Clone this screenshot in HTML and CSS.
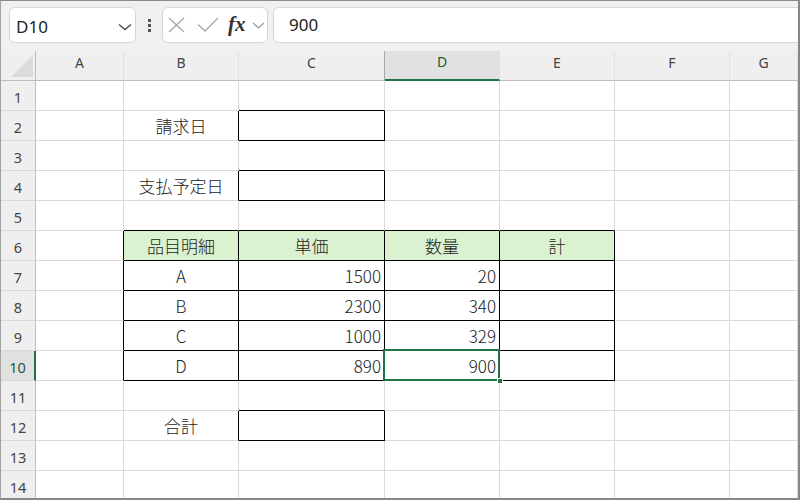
FILE: index.html
```html
<!DOCTYPE html>
<html lang="ja">
<head>
<meta charset="utf-8">
<title>Sheet</title>
<link rel="stylesheet" href="styles.css">
</head>
<body>
<div class="window">
  <div class="toolbar">
    <div class="namebox">
      <span class="nb-text">D10</span>
      <svg class="nb-chev" width="14" height="8" viewBox="0 0 14 8"><polyline points="1,1.5 7,6.5 13,1.5" fill="none" stroke="#4a4a4a" stroke-width="1.4"/></svg>
    </div>
    <div class="dots"><i></i><i></i><i></i></div>
    <div class="fxbox">
      <svg class="ic-x" width="17" height="16" viewBox="0 0 17 16"><line x1="1" y1="1" x2="16" y2="15" stroke="#a9a9a9" stroke-width="1.4"/><line x1="16" y1="1" x2="1" y2="15" stroke="#a9a9a9" stroke-width="1.4"/></svg>
      <svg class="ic-ok" width="22" height="15" viewBox="0 0 22 15"><polyline points="1,7.5 8,14 21,1" fill="none" stroke="#a9a9a9" stroke-width="1.4"/></svg>
      <span class="fx">fx</span>
      <svg class="ic-chev" width="13" height="7" viewBox="0 0 13 7"><polyline points="1,1 6.5,6 12,1" fill="none" stroke="#9a9a9a" stroke-width="1.2"/></svg>
    </div>
    <div class="formula">900</div>
  </div>

  <div class="sheet">
    <!-- column headers -->
    <div class="corner"><i class="tri"></i></div>
    <div class="h">A</div><div class="h">B</div><div class="h h-before-sel">C</div><div class="h sel-h">D</div><div class="h">E</div><div class="h">F</div><div class="h">G</div>

    <!-- row 1 -->
    <div class="rh">1</div>
    <div class="c"></div><div class="c"></div><div class="c kb"></div><div class="c"></div><div class="c"></div><div class="c"></div><div class="c"></div>
    <!-- row 2 -->
    <div class="rh">2</div>
    <div class="c"></div><div class="c ctr kr">請求日</div><div class="c kb kr"></div><div class="c"></div><div class="c"></div><div class="c"></div><div class="c"></div>
    <!-- row 3 -->
    <div class="rh">3</div>
    <div class="c"></div><div class="c"></div><div class="c kb"></div><div class="c"></div><div class="c"></div><div class="c"></div><div class="c"></div>
    <!-- row 4 -->
    <div class="rh">4</div>
    <div class="c"></div><div class="c ctr kr">支払予定日</div><div class="c kb kr"></div><div class="c"></div><div class="c"></div><div class="c"></div><div class="c"></div>
    <!-- row 5 -->
    <div class="rh">5</div>
    <div class="c"></div><div class="c kb"></div><div class="c kb"></div><div class="c kb"></div><div class="c kb"></div><div class="c"></div><div class="c"></div>
    <!-- row 6 -->
    <div class="rh">6</div>
    <div class="c kr"></div><div class="c ctr kb kr g">品目明細</div><div class="c ctr kb kr g">単価</div><div class="c ctr kb kr g">数量</div><div class="c ctr kb kr g">計</div><div class="c"></div><div class="c"></div>
    <!-- row 7 -->
    <div class="rh">7</div>
    <div class="c kr"></div><div class="c ctr kb kr">A</div><div class="c num kb kr">1500</div><div class="c num kb kr">20</div><div class="c kb kr"></div><div class="c"></div><div class="c"></div>
    <!-- row 8 -->
    <div class="rh">8</div>
    <div class="c kr"></div><div class="c ctr kb kr">B</div><div class="c num kb kr">2300</div><div class="c num kb kr">340</div><div class="c kb kr"></div><div class="c"></div><div class="c"></div>
    <!-- row 9 -->
    <div class="rh">9</div>
    <div class="c kr"></div><div class="c ctr kb kr">C</div><div class="c num kb kr">1000</div><div class="c num kb kr">329</div><div class="c kb kr"></div><div class="c"></div><div class="c"></div>
    <!-- row 10 -->
    <div class="rh sel-r">10</div>
    <div class="c kr"></div><div class="c ctr kb kr">D</div><div class="c num kb kr">890</div><div class="c num kb kr active">900<span class="sel"><i class="handle"></i></span></div><div class="c kb kr"></div><div class="c"></div><div class="c"></div>
    <!-- row 11 -->
    <div class="rh">11</div>
    <div class="c"></div><div class="c"></div><div class="c kb"></div><div class="c"></div><div class="c"></div><div class="c"></div><div class="c"></div>
    <!-- row 12 -->
    <div class="rh">12</div>
    <div class="c"></div><div class="c ctr kr">合計</div><div class="c kb kr"></div><div class="c"></div><div class="c"></div><div class="c"></div><div class="c"></div>
    <!-- row 13 -->
    <div class="rh">13</div>
    <div class="c"></div><div class="c"></div><div class="c"></div><div class="c"></div><div class="c"></div><div class="c"></div><div class="c"></div>
    <!-- row 14 -->
    <div class="rh">14</div>
    <div class="c"></div><div class="c"></div><div class="c"></div><div class="c"></div><div class="c"></div><div class="c"></div><div class="c"></div>
  </div>
</div>
</body>
</html>
```
FILE: styles.css
```css
* { box-sizing: border-box; }
html, body { margin: 0; padding: 0; }
body {
  width: 800px;
  height: 500px;
  overflow: hidden;
  background: #fff;
  font-family: "Noto Sans CJK JP", "Noto Sans", sans-serif;
}
.window {
  width: 800px;
  height: 500px;
  border-style: solid;
  border-width: 1px 2px 2px 1px;
  border-color: #8a8a8a #878787 #878787 #a2a2a2;
  display: flex;
  flex-direction: column;
  overflow: hidden;
  background: #fff;
}

/* ---------- toolbar ---------- */
.toolbar {
  flex: 0 0 50px;
  height: 50px;
  background: #f0f0f0;
  display: flex;
  align-items: flex-start;
  padding: 6px 0 0 8px;
  overflow: hidden;
}
.namebox {
  width: 127px;
  height: 36px;
  background: #fff;
  border: 1px solid #d6d6d6;
  border-radius: 6px;
  display: flex;
  align-items: center;
  padding: 2px 3px 0 6px;
  font-family: "Noto Sans", sans-serif;
  font-size: 17px;
  line-height: 1;
  color: #222;
}
.nb-text { flex: 1; }
.nb-chev { display: block; margin-top: 1px; }
.dots {
  width: 26px;
  height: 36px;
  display: flex;
  flex-direction: column;
  align-items: center;
  justify-content: center;
  gap: 2px;
}
.dots i {
  display: block;
  width: 3px;
  height: 3px;
  background: #555;
}
.fxbox {
  width: 106px;
  height: 36px;
  background: #fff;
  border: 1px solid #d6d6d6;
  border-radius: 6px;
  display: flex;
  align-items: center;
}
.ic-x { display: block; margin-left: 5px; }
.ic-ok { display: block; margin-left: 12px; margin-top: -2px; }
.fx {
  margin-left: 9px;
  font-family: "Liberation Serif", "DejaVu Serif", serif;
  font-style: italic;
  font-weight: bold;
  font-size: 21px;
  line-height: 1;
  color: #333;
  margin-top: -2px;
}
.ic-chev { display: block; margin-left: 6px; margin-top: 1px; }
.formula {
  flex: 1;
  height: 36px;
  margin-left: 5px;
  margin-right: -12px;
  background: #fff;
  border: 1px solid #d6d6d6;
  border-radius: 6px;
  display: flex;
  align-items: center;
  padding: 0 0 1px 15px;
  font-family: "Noto Sans", sans-serif;
  font-size: 17px;
  line-height: 1;
  color: #222;
}

/* ---------- sheet ---------- */
.sheet {
  flex: 1;
  display: grid;
  grid-template-columns: 35px 88px 115px 146px 115px 115px 115px 1fr;
  grid-auto-rows: 30px;
  overflow: hidden;
}
.corner {
  background: #efefef;
  border-right: 1px solid #bdbdbd;
  border-bottom: 1px solid #bdbdbd;
  display: flex;
  align-items: flex-end;
  justify-content: flex-end;
  padding: 0 2px 3px 0;
}
.tri {
  display: block;
  width: 22px;
  height: 22px;
  background: #dbdbdb;
  clip-path: polygon(100% 0, 100% 100%, 0 100%);
}
.h {
  background: #efefef;
  border-right: 1px solid #e0e0e0;
  border-bottom: 1px solid #bdbdbd;
  display: flex;
  align-items: center;
  justify-content: center;
  padding-bottom: 6px;
  font-family: "Noto Sans", sans-serif;
  font-size: 14px;
  line-height: 1;
  color: #444;
}
.h-before-sel { border-right-color: #a9a9a9; }
.sel-h {
  background: #e1e1e1;
  border-bottom: 2px solid #217346;
  color: #185c37;
}
.rh {
  background: #efefef;
  border-right: 1px solid #bdbdbd;
  border-bottom: 1px solid #d8d8d8;
  display: flex;
  align-items: center;
  justify-content: center;
  padding-top: 3px;
  font-family: "Noto Sans", sans-serif;
  font-size: 14.5px;
  line-height: 1;
  color: #444;
}
.sel-r {
  background: #e1e1e1;
  border-right: 2px solid #217346;
  color: #185c37;
}
.c {
  border-right: 1px solid #dadada;
  border-bottom: 1px solid #dadada;
  display: flex;
  align-items: center;
  font-size: 17px;
  font-weight: 300;
  line-height: 1;
  color: #222;
  white-space: nowrap;
}
.ctr { justify-content: center; }
.num { justify-content: flex-end; padding-right: 3px; }
.kb { border-bottom-color: #000; }
.kr { border-right-color: #000; }
.g { background: #daf2d0; }

.active { position: relative; }
.sel {
  position: absolute;
  top: -2px;
  left: -2px;
  right: -1px;
  bottom: -1px;
  border: 2px solid #217346;
  z-index: 2;
}
.handle {
  position: absolute;
  right: -5px;
  bottom: -5px;
  width: 6px;
  height: 6px;
  background: #217346;
  border: 1px solid #fff;
}
```
